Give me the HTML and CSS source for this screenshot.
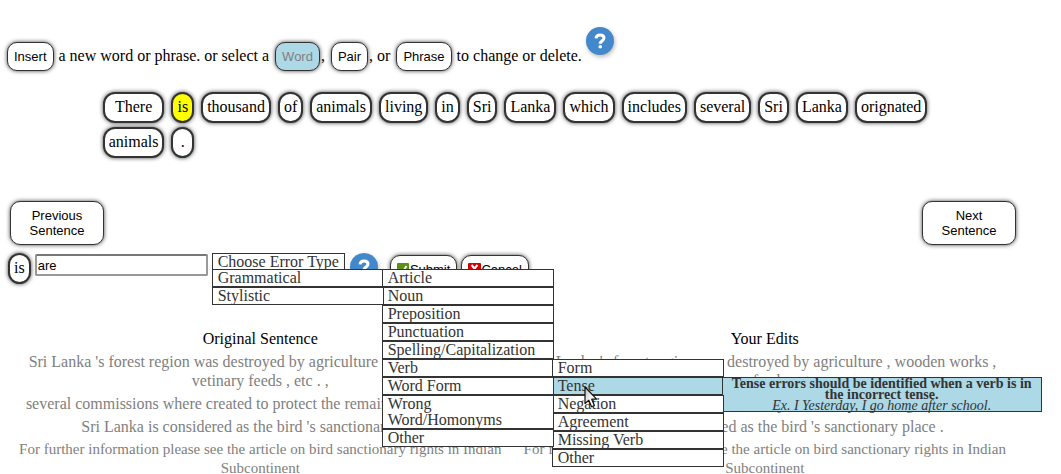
FILE: index.html
```html
<!DOCTYPE html>
<html lang="en">
<head>
<meta charset="utf-8">
<title>Sentence Editor</title>
<link rel="stylesheet" href="styles.css">
</head>
<body>
<div class="toolbar">
  <button class="pill" type="button">Insert</button> a new word or phrase. or select a <button class="pill pill-active" type="button" disabled>Word</button>, <button class="pill" type="button">Pair</button>, or <button class="pill" type="button">Phrase</button> to change or delete.
  <button class="help help-raised" type="button" aria-label="Help"><svg viewBox="0 0 28 28" width="28" height="28"><path d="M10 11.4C10.2 8.8 11.8 8 14.1 8C16.6 8 18 9.2 18 11.1C18 13.8 14.3 13.7 14.2 16.8" fill="none" stroke="#fff" stroke-width="3"/><circle cx="14.2" cy="19.8" r="1.8" fill="#fff"/></svg></button>
</div>

<div class="words">
  <button class="word" type="button">There</button>
  <button class="word word-selected" type="button">is</button>
  <button class="word" type="button">thousand</button>
  <button class="word" type="button">of</button>
  <button class="word" type="button">animals</button>
  <button class="word" type="button">living</button>
  <button class="word" type="button">in</button>
  <button class="word" type="button">Sri</button>
  <button class="word" type="button">Lanka</button>
  <button class="word" type="button">which</button>
  <button class="word" type="button">includes</button>
  <button class="word" type="button">several</button>
  <button class="word" type="button">Sri</button>
  <button class="word" type="button">Lanka</button>
  <button class="word" type="button">orignated</button>
  <button class="word" type="button">animals</button>
  <button class="word" type="button">.</button>
</div>

<div class="pager">
  <button class="pill pager-button" type="button">Previous<br>Sentence</button>
  <button class="pill pager-button" type="button">Next<br>Sentence</button>
</div>

<form class="editor">
  <label class="word" for="replacement">is</label>
  <input class="field" id="replacement" type="text" value="are">
  <div class="chooser">
    <button class="chooser-title" type="button">Choose Error Type</button>
    <ul class="menu menu-root">
      <li class="item">Grammatical
        <ul class="menu menu-side">
          <li class="item">Article</li>
          <li class="item">Noun</li>
          <li class="item">Preposition</li>
          <li class="item">Punctuation</li>
          <li class="item">Spelling/Capitalization</li>
          <li class="item">Verb
            <ul class="menu menu-side">
              <li class="item">Form</li>
              <li class="item item-active">Tense
                <div class="tip"><b>Tense errors should be identified when a verb is in the incorrect tense.</b><br><i>Ex. I Yesterday, I go home after school.</i></div>
              </li>
              <li class="item">Negation</li>
              <li class="item">Agreement</li>
              <li class="item">Missing Verb</li>
              <li class="item">Other</li>
            </ul>
          </li>
          <li class="item">Word Form</li>
          <li class="item">Wrong<br>Word/Homonyms</li>
          <li class="item">Other</li>
        </ul>
      </li>
      <li class="item">Stylistic</li>
    </ul>
  </div>
  <button class="help" type="button" aria-label="Help"><svg viewBox="0 0 28 28" width="28" height="28"><path d="M10 11.4C10.2 8.8 11.8 8 14.1 8C16.6 8 18 9.2 18 11.1C18 13.8 14.3 13.7 14.2 16.8" fill="none" stroke="#fff" stroke-width="3"/><circle cx="14.2" cy="19.8" r="1.8" fill="#fff"/></svg></button>
  <div class="actions">
    <button class="pill action" type="button"><svg viewBox="0 0 13 14" width="13" height="14"><rect width="12" height="14" rx="1" fill="#5a9216"/><path d="M2.5 7.5L5 10L9.5 3" fill="none" stroke="#fff" stroke-width="2"/></svg>Submit</button>
    <button class="pill action" type="button"><svg viewBox="0 0 13 14" width="13" height="14"><rect width="13" height="14" rx="1" fill="#d40000"/><path d="M3.5 2L9.5 9M9.5 2L3.5 9" stroke="#fff" stroke-width="2"/></svg>Cancel</button>
  </div>
</form>

<table class="sentences">
  <thead>
    <tr><th>Original Sentence</th><th>Your Edits</th></tr>
  </thead>
  <tbody>
    <tr><td>Sri Lanka 's forest region was destroyed by agriculture , wooden works , vetinary feeds , etc . ,</td><td>Sri Lanka 's forest region was destroyed by agriculture , wooden works , vetinary feeds , etc . ,</td></tr>
    <tr><td>several commissions where created to protect the remaining forest areas .</td><td>several commissions where created to protect the remaining forest areas .</td></tr>
    <tr><td>Sri Lanka is considered as the bird 's sanctionary place .</td><td>Sri Lanka is considered as the bird 's sanctionary place .</td></tr>
    <tr class="long"><td>For further information please see the article on bird sanctionary rights in Indian<br>Subcontinent</td><td>For further information please see the article on bird sanctionary rights in Indian<br>Subcontinent</td></tr>
  </tbody>
</table>

<svg class="cursor" viewBox="0 0 14 24" width="14" height="24"><defs><linearGradient id="arrow" x1="0" y1="0" x2="1" y2="1"><stop offset="0" stop-color="#bbb"/><stop offset="0.6" stop-color="#fff"/></linearGradient></defs><path d="M1 1V17.5L4.8 14.2L7.6 20.8L10.4 19.5L7.7 13.2H12.6Z" fill="url(#arrow)" stroke="#111" stroke-width="1.2" stroke-linejoin="round"/></svg>
</body>
</html>
```

FILE: styles.css
```css
* {
  box-sizing: border-box;
}

body {
  margin: 0;
  padding: 27px 44px 0 8px;
  background: #fff;
  color: #000;
  font: 16px/19px "Liberation Serif", "Times New Roman", serif;
}

button,
input {
  margin: 0;
  color: inherit;
}

.toolbar {
  margin-left: -3px;
  height: 46px;
}

.pill {
  height: 29px;
  margin: 0 1px 0 2px;
  padding: 0 6px;
  border: 1px solid #333;
  border-radius: 10px;
  background: #fff;
  box-shadow: 0 0 4px #444;
  font: 13px/15px "Liberation Sans", Arial, sans-serif;
}

.pill-active {
  background: lightblue;
  color: gray;
}

.help {
  width: 28px;
  height: 28px;
  padding: 0;
  border: 0;
  border-radius: 50%;
  background: #4488cc;
  box-shadow: 1px 2px 4px #bbb;
}

.help svg {
  display: block;
}

.help-raised {
  vertical-align: 6px;
}

.words {
  display: grid;
  grid-template-columns: repeat(15, auto);
  justify-content: center;
  gap: 4px 7px;
  margin-top: 19px;
  padding-left: 5px;
}

.word {
  height: 31px;
  padding: 0 4px 1px;
  border: 2px solid #333;
  border-radius: 12px;
  background: #fff;
  box-shadow: 0 0 4px #444;
  font: 16px/26px "Liberation Serif", "Times New Roman", serif;
  text-align: center;
}

.word-selected {
  background: yellow;
}

.pager {
  display: flex;
  justify-content: space-between;
  margin-top: 43px;
}

.pager-button {
  width: 94px;
  height: 44px;
}

.editor {
  display: flex;
  align-items: flex-start;
  margin-top: 8px;
}

.field {
  width: 173px;
  height: 22px;
  margin: 1px 4px 0 4px;
  padding: 0 1px;
  border: 2px solid #999;
  border-top-color: #777;
  border-radius: 2px;
  background: #fff;
  font: 13px/15px "Liberation Sans", Arial, sans-serif;
}

.chooser {
  position: relative;
  z-index: 1;
  margin-right: 5px;
  color: #333;
}

.chooser-title {
  display: block;
  height: 17px;
  padding: 0 5px;
  border: 1px solid #333;
  background: #fff;
  font: 16px/16px "Liberation Serif", "Times New Roman", serif;
}

.menu {
  position: absolute;
  width: 172px;
  margin: 0;
  padding: 0;
  list-style: none;
  line-height: 16px;
}

.menu-root {
  top: 16px;
  left: 0;
}

.menu-side {
  top: -1px;
  left: 169px;
}

.item {
  position: relative;
  padding: 0 5px;
  border: 1px solid #333;
  background: #fff;
}

.item-active {
  background: lightblue;
}

.tip {
  position: absolute;
  top: -1px;
  left: 169px;
  width: 320px;
  padding: 0 5px;
  border: 1px solid #333;
  background: lightblue;
  font-size: 14px;
  line-height: 11px;
  text-align: center;
}

.actions {
  display: flex;
  gap: 4px;
  margin: 2px 0 0 12px;
}

.action {
  display: flex;
  align-items: center;
  margin: 0;
}

.sentences {
  width: 100%;
  margin-top: 43px;
  border-collapse: collapse;
  table-layout: fixed;
  text-align: center;
}

.sentences th,
.sentences td {
  padding: 2px;
  vertical-align: top;
}

.sentences th {
  font-weight: normal;
}

.sentences td {
  color: gray;
}

.sentences .long {
  font-size: 15px;
}

.cursor {
  position: absolute;
  top: 386px;
  left: 584px;
  z-index: 2;
}
```
